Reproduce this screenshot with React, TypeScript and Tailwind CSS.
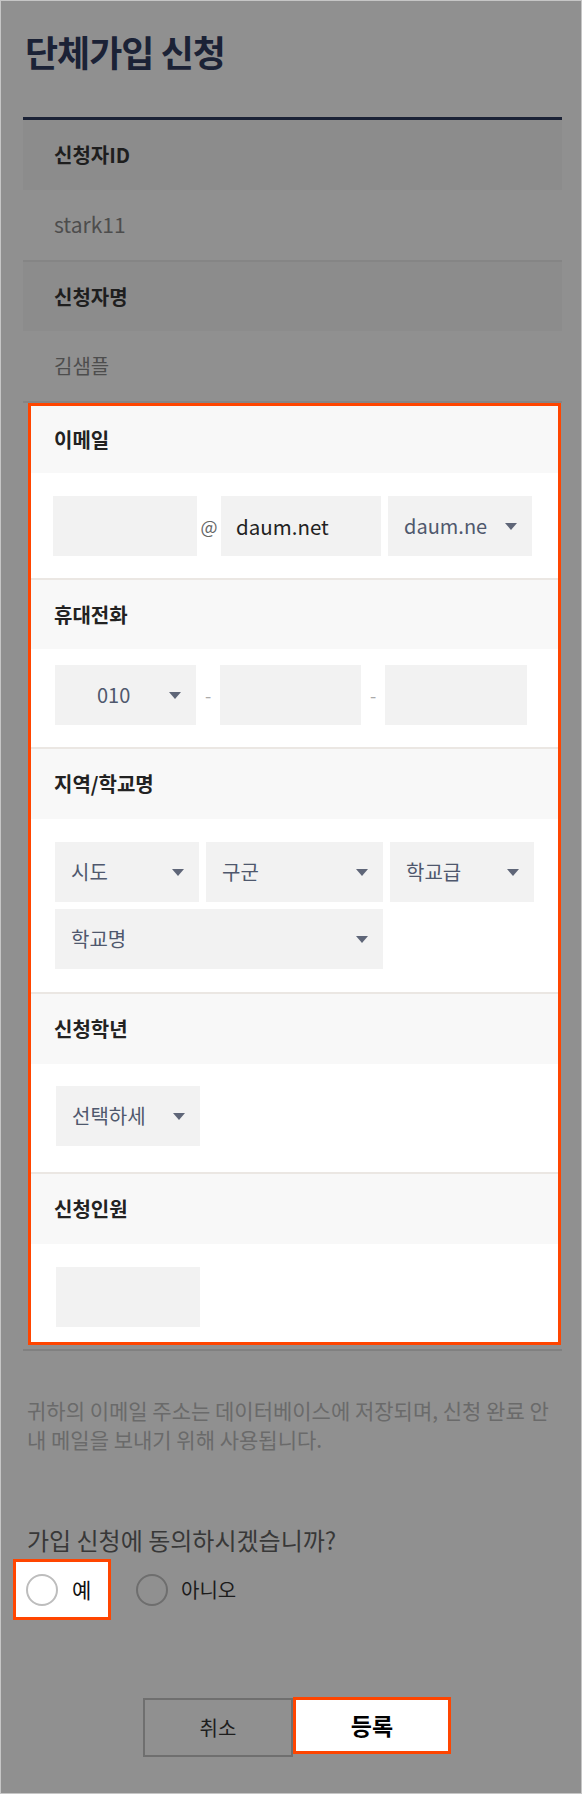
import React from "react";

const Arrow = ({ color = "#5f6678" }: { color?: string }) => (
  <svg width="12" height="7" viewBox="0 0 12 7" className="shrink-0">
    <path d="M0 0 H12 L6 7 Z" fill={color} />
  </svg>
);

const Select = ({
  label,
  w,
  textPl = "pl-[16px]",
}: {
  label: string;
  w: string;
  textPl?: string;
}) => (
  <div className={`${w} h-[60px] bg-[#f2f2f2] flex items-center justify-between pr-[15px] ${textPl}`}>
    <span className="text-[20px] text-[#4f586d]">{label}</span>
    <Arrow />
  </div>
);

const BoxHeader = ({ label, h }: { label: string; h: string }) => (
  <div className={`${h} bg-[#f8f8f8] flex items-center pl-[23px]`}>
    <span className="text-[20px] font-bold text-[#222]">{label}</span>
  </div>
);

const Sep = () => <div className="h-[2px] bg-[#ebe7e3]" />;

export default function App() {
  return (
    <div className="w-[582px] h-[1794px] border border-[#c6c6c6] bg-[#909090] font-['Noto_Sans_CJK_KR','Noto_Sans',sans-serif] overflow-hidden">
      <div className="pt-[26px] pl-[24px]">
        <h1 className="text-[36px] leading-[48px] font-bold text-[#1b2236] tracking-[-1px]">
          단체가입 신청
        </h1>
      </div>

      <div className="ml-[22px] w-[539px] mt-[42px]">
        <div className="h-[3px] bg-[#1b2236]" />
        <div className="h-[70px] bg-[#8c8c8c] flex items-center pl-[31px]">
          <span className="text-[20px] font-bold text-[#1e1e1e]">신청자ID</span>
        </div>
        <div className="h-[70px] flex items-center pl-[31px]">
          <span className="text-[21px] text-[#4d4d4d]">stark11</span>
        </div>
        <div className="h-[2px] bg-[#858585]" />
        <div className="h-[69px] bg-[#8c8c8c] flex items-center pl-[31px]">
          <span className="text-[20px] font-bold text-[#1e1e1e]">신청자명</span>
        </div>
        <div className="h-[70px] flex items-center pl-[31px]">
          <span className="text-[20px] text-[#4d4d4d]">김샘플</span>
        </div>
        <div className="h-[2px] bg-[#858585]" />

        <div className="ml-[5px] mr-[1px] border-[3px] border-[#ff4500] bg-white">
          <BoxHeader label="이메일" h="h-[67px]" />
          <div className="h-[105px] pt-[23px] pl-[22px] flex items-start">
            <div className="w-[144px] h-[60px] bg-[#f2f2f2]" />
            <div className="w-[24px] h-[60px] flex items-center justify-center text-[18px] text-[#666]">@</div>
            <div className="w-[160px] h-[60px] bg-[#f2f2f2] flex items-center pl-[15px]">
              <span className="text-[20.5px] text-[#222]">daum.net</span>
            </div>
            <div className="ml-[7px]">
              <Select label="daum.ne" w="w-[144px]" />
            </div>
          </div>
          <Sep />
          <BoxHeader label="휴대전화" h="h-[69px]" />
          <div className="h-[98px] pt-[16px] pl-[24px] flex items-start">
            <Select label="010" w="w-[141px]" textPl="pl-[42px]" />
            <div className="w-[24px] h-[60px] flex items-center justify-center text-[18px] text-[#aaa]">-</div>
            <div className="w-[141px] h-[60px] bg-[#f2f2f2]" />
            <div className="w-[24px] h-[60px] flex items-center justify-center text-[18px] text-[#aaa]">-</div>
            <div className="w-[142px] h-[60px] bg-[#f2f2f2]" />
          </div>
          <Sep />
          <BoxHeader label="지역/학교명" h="h-[70px]" />
          <div className="h-[173px] pt-[23px] pl-[24px]">
            <div className="flex gap-[7px]">
              <Select label="시도" w="w-[144px]" />
              <Select label="구군" w="w-[177px]" />
              <Select label="학교급" w="w-[144px]" />
            </div>
            <div className="mt-[7px] flex">
              <Select label="학교명" w="w-[328px]" />
            </div>
          </div>
          <Sep />
          <BoxHeader label="신청학년" h="h-[70px]" />
          <div className="h-[108px] pt-[22px] pl-[25px] flex items-start">
            <Select label="선택하세" w="w-[144px]" />
          </div>
          <Sep />
          <BoxHeader label="신청인원" h="h-[70px]" />
          <div className="h-[98px] pt-[23px] pl-[25px] flex items-start">
            <div className="w-[144px] h-[60px] bg-[#f2f2f2]" />
          </div>
        </div>

        <div className="mt-[4px] h-[2px] bg-[#808080]" />

        <p className="mt-[45px] pl-[4px] pr-[10px] text-[21px] leading-[29px] text-[#6a6a6a]">
          귀하의 이메일 주소는 데이터베이스에 저장되며, 신청 완료 안내 메일을 보내기 위해 사용됩니다.
        </p>
      </div>

      <div className="mt-[70px] pl-[26px] text-[24px] leading-[32px] text-[#383838]">
        가입 신청에 동의하시겠습니까?
      </div>

      <div className="mt-[3px] ml-[12px] flex items-center">
        <div className="w-[98px] h-[61px] border-[3px] border-[#ff4500] bg-white flex items-center pl-[10px]">
          <div className="w-[32px] h-[32px] rounded-full border-2 border-[#bdbdbd]" />
          <span className="ml-[14px] text-[21px] text-[#111]">예</span>
        </div>
        <div className="ml-[25px] w-[32px] h-[32px] rounded-full border-2 border-[#6e6e6e]" />
        <span className="ml-[13px] text-[20px] text-[#1c1c1c]">아니오</span>
      </div>

      <div className="mt-[78px] ml-[142px] flex items-start">
        <div className="w-[150px] h-[59px] border-2 border-[#6f6f6f] flex items-center justify-center">
          <span className="text-[20px] text-[#1e1e1e]">취소</span>
        </div>
        <div className="w-[158px] h-[57px] -mt-px border-[3px] border-[#ff4500] bg-white flex items-center justify-center">
          <span className="text-[23px] font-bold text-black">등록</span>
        </div>
      </div>
    </div>
  );
}
